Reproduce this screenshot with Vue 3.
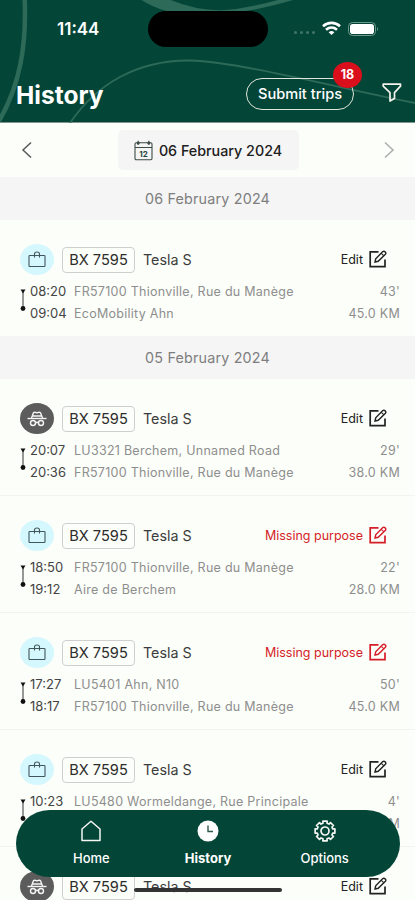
<template>
  <div class="screen">
    <!-- header -->
    <header class="header">
      <svg class="header-lines" width="415" height="123" viewBox="0 0 415 123" fill="none">
        <path d="M24.500 -5C27 45 20 85 -1 121" stroke="#2d6a58" stroke-width="4.500" />
        <path d="M136 -4Q158 14 200 16Q250 14 303 -3L288 -3Q262 5 236 9Q200 14 164 -3Z" fill="#2d6a58" />
        <path d="M70 123C96 85 136 60 190 60.500C240 62 330 86 415 103" stroke="#2d6a58" stroke-width="1.800" />
      </svg>
      <div class="island"></div>
      <div class="status-bar">
        <span class="clock">11:44</span>
        <div class="status-icons">
          <span class="dots"><i v-for="n in 4" :key="n"></i></span>
          <svg class="wifi" width="19" height="15" viewBox="0 0 19 15" fill="none" stroke="#fff" stroke-width="2.700">
            <path d="M1 5.200C6 0.800 13 0.800 18 5.200" />
            <path d="M4 8.800C7.300 6 11.700 6 15 8.800" />
            <path d="M9.500 14L6.600 11.200Q9.500 9 12.400 11.200Z" fill="#fff" stroke="none" />
          </svg>
          <svg width="31" height="14" viewBox="0 0 31 14">
            <rect x="0.500" y="0.500" width="27" height="13" rx="4" fill="none" stroke="#6d978b" />
            <rect x="2" y="2" width="24" height="10" rx="2.800" fill="#fff" />
            <path d="M29 5Q31 7 29 9Z" fill="#6d978b" />
          </svg>
        </div>
      </div>
      <div class="title-bar">
        <h1>History</h1>
        <button class="submit">
          Submit trips
          <span class="badge">18</span>
        </button>
        <svg class="filter" width="20" height="20" viewBox="0 0 20 20" fill="none" stroke="#f2f4ec" stroke-width="1.700" stroke-linejoin="round">
          <path d="M1.200 1.200H18.500V3.200L12.500 9.700V15.500L8 18V9.700L1.200 3.200Z" />
        </svg>
      </div>
    </header>

    <!-- date picker -->
    <div class="date-nav">
      <svg width="12" height="18" viewBox="0 0 12 18" fill="none" stroke="#555a57" stroke-width="1.500">
        <path d="M10 1.500L2 9L10 16.500" />
      </svg>
      <button class="date-button">
        <svg width="19" height="21" viewBox="0 0 19 21" fill="none" stroke="#3c4b47" stroke-width="1.100">
          <rect x="1" y="2.800" width="17" height="17" rx="1.200" />
          <path d="M1 7.500H18M4.200 0.800V4.800M14.800 0.800V4.800" />
          <circle cx="4.200" cy="3" r="1" fill="#3c4b47" />
          <circle cx="14.800" cy="3" r="1" fill="#3c4b47" />
          <text x="9.600" y="17" text-anchor="middle" class="cal-text">12</text>
        </svg>
        <span>06 February 2024</span>
      </button>
      <svg width="12" height="18" viewBox="0 0 12 18" fill="none" stroke="#aaadab" stroke-width="1.500">
        <path d="M2 1.500L10 9L2 16.500" />
      </svg>
    </div>

    <!-- trips grouped by day -->
    <section v-for="day in days" :key="day.date" class="day">
      <h2>{{ day.date }}</h2>
      <article v-for="(trip, index) in day.trips" :key="index" class="trip">
        <div class="trip-head">
          <div class="purpose" :class="{ private: trip.private }">
            <svg v-if="trip.private" width="20" height="16" viewBox="0 0 20 16" fill="none" stroke="#f4f4f4" stroke-width="1.400">
              <path d="M0.500 7.500H19.500" />
              <path d="M4.500 7L6.500 1.700Q7.500 0.800 10 1.800Q12.500 0.800 13.500 1.700L15.500 7M5.500 5H14.500" />
              <circle cx="6" cy="12" r="2.500" />
              <circle cx="14" cy="12" r="2.500" />
              <path d="M8.500 12Q10 10.500 11.500 12" />
            </svg>
            <svg v-else width="18" height="17" viewBox="0 0 18 17" fill="none" stroke="#40565a" stroke-width="1.100">
              <rect x="1" y="4.500" width="16" height="11" rx="0.800" />
              <path d="M6.500 6.500V3Q6.500 1 9 1Q11.500 1 11.500 3V6.500" />
            </svg>
          </div>
          <span class="plate">BX 7595</span>
          <span class="car">Tesla S</span>
          <div class="edit" :class="{ missing: trip.missing }">
            <span>{{ trip.missing ? 'Missing purpose' : 'Edit' }}</span>
            <svg width="18" height="19" viewBox="0 0 18 19" fill="none" stroke="currentColor">
              <path d="M9.500 1.800H1.200V16.600H16V9.500" stroke-width="1.700" />
              <path d="M6 12L6.700 8.800L13.800 1.600Q15 0.800 16.300 2Q17.300 3.200 16.400 4.200L9.200 11.300Z" stroke-width="1.400" />
              <path d="M12.300 3.300L14.700 5.700" stroke-width="1.100" />
            </svg>
          </div>
        </div>
        <div class="route">
          <svg class="track" width="6" height="24" viewBox="0 0 6 24">
            <path d="M3 3V21" stroke="#333" stroke-width="1" />
            <path d="M0.500 1.500H5.500L3 5.500Z" fill="#111" />
            <circle cx="3" cy="20.500" r="2.400" fill="#111" />
          </svg>
          <div class="stops">
            <div class="stop">
              <span class="time">{{ trip.start }}</span>
              <span class="place">{{ trip.from }}</span>
              <span class="amount">{{ trip.duration }}</span>
            </div>
            <div class="stop">
              <span class="time">{{ trip.end }}</span>
              <span class="place">{{ trip.to }}</span>
              <span class="amount">{{ trip.distance }}</span>
            </div>
          </div>
        </div>
      </article>
    </section>

    <div class="home-indicator"></div>

    <!-- bottom tabs -->
    <nav class="tabs">
      <a class="tab">
        <svg width="22" height="22" viewBox="0 0 22 22" fill="none" stroke="#f4f6f2" stroke-width="1.500">
          <path d="M2 9L11 1.300L20 9V20.500H2Z" stroke-linejoin="round" />
        </svg>
        <span>Home</span>
      </a>
      <a class="tab active">
        <svg width="22" height="22" viewBox="0 0 22 22">
          <circle cx="11" cy="11" r="10.500" fill="#fff" />
          <path d="M11 5.500V11.500H16" fill="none" stroke="#32594e" stroke-width="1.400" />
        </svg>
        <span>History</span>
      </a>
      <a class="tab">
        <svg width="22" height="22" viewBox="0 0 22 22" fill="none" stroke="#f4f6f2" stroke-width="1.700" stroke-linejoin="round">
          <path :d="gearPath" />
          <circle cx="11" cy="11" r="4" />
        </svg>
        <span>Options</span>
      </a>
    </nav>
  </div>
</template>

<script setup>
import { ref } from 'vue'

const days = ref([
  {
    date: '06 February 2024',
    trips: [
      {
        start: '08:20',
        end: '09:04',
        from: 'FR57100 Thionville, Rue du Manège',
        to: 'EcoMobility Ahn',
        duration: "43'",
        distance: '45.0 KM'
      }
    ]
  },
  {
    date: '05 February 2024',
    trips: [
      {
        private: true,
        start: '20:07',
        end: '20:36',
        from: 'LU3321 Berchem, Unnamed Road',
        to: 'FR57100 Thionville, Rue du Manège',
        duration: "29'",
        distance: '38.0 KM'
      },
      {
        missing: true,
        start: '18:50',
        end: '19:12',
        from: 'FR57100 Thionville, Rue du Manège',
        to: 'Aire de Berchem',
        duration: "22'",
        distance: '28.0 KM'
      },
      {
        missing: true,
        start: '17:27',
        end: '18:17',
        from: 'LU5401 Ahn, N10',
        to: 'FR57100 Thionville, Rue du Manège',
        duration: "50'",
        distance: '45.0 KM'
      },
      {
        start: '10:23',
        end: '',
        from: 'LU5480 Wormeldange, Rue Principale',
        to: '',
        duration: "4'",
        distance: '4.0 KM'
      },
      {
        private: true,
        start: '',
        end: '',
        from: '',
        to: '',
        duration: '',
        distance: ''
      }
    ]
  }
])

// gear outline with eight teeth
const gearPath = makeGear(8)

function makeGear(teeth) {
  const points = []
  const step = (Math.PI * 2) / teeth
  for (let i = 0; i < teeth; i++) {
    const angle = i * step
    const corners = [[-0.26, 8], [-0.21, 10.1], [0.21, 10.1], [0.26, 8]]
    corners.forEach(([offset, r]) => {
      const x = 11 + r * Math.sin(angle + offset)
      const y = 11 - r * Math.cos(angle + offset)
      points.push(`${x.toFixed(2)} ${y.toFixed(2)}`)
    })
  }
  return `M${points.join('L')}Z`
}
</script>

<style>
body {
  margin: 0;
  overflow: hidden;
}
</style>

<style scoped>
.screen {
  position: relative;
  width: 415px;
  height: 900px;
  overflow: hidden;
  background: #fcfef9;
  font-family: Inter, 'Liberation Sans', sans-serif;
  color: #222;
}

.screen * {
  box-sizing: border-box;
}

button {
  font-family: inherit;
  border: none;
  padding: 0;
}

.header {
  position: relative;
  height: 123px;
  background: #034638;
  color: #fff;
  border-bottom: 1px solid #7e948c;
}

.header-lines {
  position: absolute;
  top: 0;
  left: 0;
}

.island {
  position: absolute;
  top: 11px;
  left: 148px;
  width: 120px;
  height: 36px;
  border-radius: 18px;
  background: #000;
}

.status-bar {
  position: relative;
  display: flex;
  justify-content: space-between;
  align-items: center;
  height: 57px;
  padding: 0 36px 0 57px;
}

.clock {
  font-size: 17px;
  font-weight: 600;
}

.status-icons {
  display: flex;
  align-items: center;
  gap: 7px;
}

.dots {
  display: flex;
  gap: 2.500px;
  padding-top: 8px;
}

.dots i {
  width: 3.500px;
  height: 3.500px;
  border-radius: 50%;
  background: #427567;
}

.title-bar {
  position: relative;
  display: flex;
  align-items: center;
  height: 72px;
  padding: 0 13px 0 16px;
}

h1 {
  flex: 1;
  margin: 4px 0 0;
  font-size: 24.500px;
  font-weight: 700;
  line-height: 30px;
}

.submit {
  position: relative;
  width: 108px;
  height: 32px;
  margin-top: 2px;
  margin-right: 28px;
  border: 1.500px solid #dfe6d9;
  border-radius: 16px;
  background: transparent;
  color: #fff;
  font-size: 14.600px;
  font-weight: 500;
  white-space: nowrap;
}

.badge {
  position: absolute;
  top: -17px;
  right: -9px;
  width: 29px;
  height: 26px;
  border-radius: 50%;
  background: #d9101b;
  font-size: 12.500px;
  font-weight: 700;
  line-height: 26px;
  text-align: center;
}

.date-nav {
  display: flex;
  justify-content: space-between;
  align-items: center;
  height: 54px;
  padding: 0 20px 0 21px;
}

.date-button {
  display: flex;
  justify-content: center;
  align-items: center;
  gap: 6px;
  width: 181px;
  height: 40px;
  border-radius: 5px;
  background: #f5f5f5;
  color: #202020;
  font-size: 14.300px;
  font-weight: 500;
  white-space: nowrap;
}

.cal-text {
  font-size: 8px;
  font-weight: 700;
  fill: #24443c;
  stroke: none;
}

h2 {
  margin: 0;
  height: 43px;
  background: #f5f5f5;
  color: #7e7e7e;
  font-size: 14.300px;
  font-weight: 400;
  line-height: 44px;
  letter-spacing: 0.200px;
  text-align: center;
}

.trip {
  height: 117px;
  padding: 24px 15px 0 20px;
  border-bottom: 1px solid #f2f4f0;
}

.trip:last-child {
  height: 116px;
  border-bottom: none;
}

.trip-head {
  display: flex;
  align-items: center;
  height: 31px;
}

.purpose {
  display: flex;
  justify-content: center;
  align-items: center;
  width: 34px;
  height: 31px;
  margin-right: 8px;
  border-radius: 50%;
  background: #d5f7fe;
}

.purpose.private {
  background: #5c5c5c;
}

.plate {
  width: 73px;
  height: 26px;
  border: 1px solid #cfcfcf;
  border-radius: 4px;
  color: #2c2c2c;
  font-size: 14.600px;
  line-height: 24px;
  text-align: center;
}

.car {
  margin-left: 8px;
  color: #3c3c3c;
  font-size: 14.300px;
}

.edit {
  display: flex;
  align-items: center;
  gap: 6px;
  margin-left: auto;
  margin-right: 13px;
  font-size: 12.500px;
}

.edit.missing {
  color: #d51d28;
}

.route {
  display: flex;
  margin-top: 6px;
}

.track {
  margin: 7px 4px 0 0;
}

.stops {
  flex: 1;
}

.stop {
  display: flex;
  height: 21.500px;
  color: #8e8e8e;
  font-size: 12.500px;
  line-height: 21px;
  letter-spacing: 0.270px;
  white-space: nowrap;
}

.time {
  width: 44px;
  color: #444;
  font-size: 13px;
  letter-spacing: 0;
}

.place {
  flex: 1;
}

.home-indicator {
  position: absolute;
  left: 134px;
  top: 888px;
  width: 148px;
  height: 4px;
  border-radius: 2px;
  background: #333;
}

.tabs {
  position: absolute;
  left: 16px;
  top: 810px;
  display: flex;
  width: 384px;
  height: 67px;
  padding: 0 17px;
  border-radius: 34px;
  background: #034638;
}

.tab {
  display: flex;
  flex: 1;
  flex-direction: column;
  align-items: center;
  gap: 7px;
  padding-top: 10px;
  color: #fff;
  font-size: 13px;
  font-weight: 500;
  line-height: 18px;
}

.tab.active {
  font-weight: 700;
}
</style>
